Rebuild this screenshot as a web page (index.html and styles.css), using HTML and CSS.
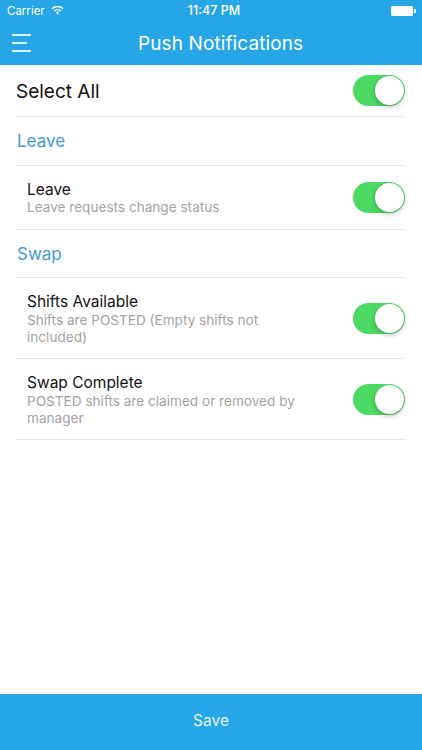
FILE: index.html
```html
<!DOCTYPE html>
<html lang="en">
<head>
  <meta charset="UTF-8" />
  <meta name="viewport" content="width=device-width, initial-scale=1.0"/>
  <title>Push Notifications</title>
  <link rel="stylesheet" href="styles.css">
</head>
<body>
  <div class="header">
    <div class="status-bar">
      <div class="status-left">
        <span>Carrier</span>
        <svg class="wifi" width="13" height="10" viewBox="0 0 13 10">
          <path d="M0.5 3.2a8.6 8.6 0 0 1 12 0l-1 1.1a7.1 7.1 0 0 0-10 0z" fill="#fff"/>
          <path d="M2.7 5.4a5.5 5.5 0 0 1 7.6 0l-1 1.1a4 4 0 0 0-5.6 0z" fill="#fff"/>
          <path d="M4.8 7.4a2.5 2.5 0 0 1 3.4 0L6.5 9.4z" fill="#fff"/>
        </svg>
      </div>
      <span class="clock">11:47 PM</span>
      <div class="battery"><span class="battery-body"></span><span class="battery-tip"></span></div>
    </div>
    <div class="nav-bar">
      <button class="menu-button" aria-label="Menu">
        <span class="menu-line"></span>
        <span class="menu-line short"></span>
        <span class="menu-line"></span>
      </button>
      <h1>Push Notifications</h1>
    </div>
  </div>

  <div class="content">
    <div class="select-all">
      <span>Select All</span>
      <div class="switch"></div>
    </div>

    <h2 class="section-title">Leave</h2>
    <div class="row">
      <div class="row-text">
        <h3>Leave</h3>
        <p>Leave requests change status</p>
      </div>
      <div class="switch"></div>
    </div>

    <h2 class="section-title">Swap</h2>
    <div class="row">
      <div class="row-text">
        <h3>Shifts Available</h3>
        <p>Shifts are POSTED (Empty shifts not included)</p>
      </div>
      <div class="switch"></div>
    </div>
    <div class="row">
      <div class="row-text">
        <h3>Swap Complete</h3>
        <p>POSTED shifts are claimed or removed by manager</p>
      </div>
      <div class="switch"></div>
    </div>
  </div>

  <button class="save">Save</button>
</body>
</html>
```

FILE: styles.css
```css
* {
  box-sizing: border-box;
}

html, body {
  height: 100%;
}

body {
  margin: 0;
  display: flex;
  flex-direction: column;
  overflow: hidden;
  background: #fff;
  font-family: Inter, "Liberation Sans", sans-serif;
  color: #111;
}

.header {
  background: #26a6e6;
  color: #fff;
  height: 65px;
  flex: none;
}

.status-bar {
  display: grid;
  grid-template-columns: 1fr auto 1fr;
  align-items: center;
  height: 21px;
  padding: 0 6px 0 7px;
  font-size: 11.5px;
}

.status-left {
  display: flex;
  align-items: center;
  gap: 6px;
}

.wifi {
  margin-top: -2px;
}

.clock {
  padding-left: 5px;
  font-size: 12.5px;
  font-weight: 500;
}

.battery {
  display: flex;
  align-items: center;
  justify-content: flex-end;
}

.battery-body {
  width: 22px;
  height: 10px;
  background: #fff;
  border-radius: 1.5px;
}

.battery-tip {
  width: 2px;
  height: 4px;
  margin-left: 1px;
  background: #fff;
  border-radius: 0 1px 1px 0;
}

.nav-bar {
  height: 44px;
  padding-left: 12px;
  display: flex;
  align-items: center;
}

.nav-bar h1 {
  margin: 0 0 0 107px;
  font-size: 19px;
  font-weight: 400;
  letter-spacing: 0.1px;
}

.menu-button {
  flex: none;
  width: 19px;
  padding: 0;
  border: none;
  background: none;
  display: flex;
  flex-direction: column;
  gap: 6px;
}

.menu-line {
  display: block;
  width: 19px;
  height: 2px;
  background: #d9f0fb;
}

.menu-line.short {
  width: 15px;
}

.content {
  flex: 1;
  padding: 0 16px;
}

.select-all {
  display: flex;
  align-items: center;
  justify-content: space-between;
  height: 52px;
  padding-top: 1px;
  border-bottom: 1px solid #e8e8e8;
  font-size: 19px;
}

.select-all .switch {
  margin-top: -1px;
}

.section-title {
  margin: 0;
  height: 48.5px;
  padding: 1px 0 0 1px;
  display: flex;
  align-items: center;
  border-bottom: 1px solid #e8e8e8;
  font-size: 17px;
  font-weight: 400;
  color: #3f9bd8;
}

.row {
  display: flex;
  align-items: center;
  justify-content: space-between;
  gap: 12px;
  padding: 14px 0 12.5px 11px;
  border-bottom: 1px solid #e8e8e8;
}

.row-text {
  flex: 1;
  max-width: 290px;
}

.row-text h3 {
  margin: 0;
  font-size: 15.5px;
  line-height: 19px;
  font-weight: 400;
}

.row-text p {
  margin: 0.5px 0 0;
  font-size: 13.6px;
  line-height: 17px;
  color: #a3a3a3;
}

.switch {
  position: relative;
  flex: none;
  width: 52px;
  height: 31px;
  margin-right: 1px;
  border-radius: 16px;
  background: #4cd964;
}

.switch::after {
  content: "";
  position: absolute;
  top: 1px;
  right: 1px;
  width: 29px;
  height: 29px;
  border-radius: 50%;
  background: #fff;
  box-shadow: 0 2px 5px rgba(0,0,0,0.25);
}

.save {
  flex: none;
  height: 56px;
  padding: 0 0 3px;
  border: none;
  background: #26a6e6;
  color: #e3f4fd;
  font-family: inherit;
  font-size: 15.5px;
}
```
